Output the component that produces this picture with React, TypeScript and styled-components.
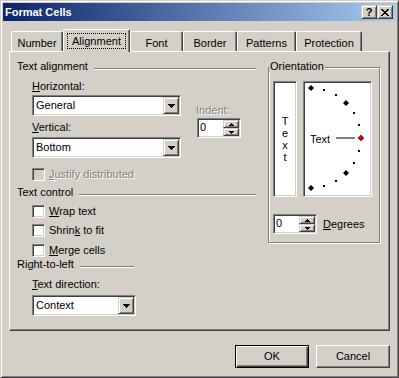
import styled, { createGlobalStyle, css } from 'styled-components';

const FACE = '#d4d0c8';
const SHADOW = '#808080';
const DARK = '#404040';
const LIGHT = '#ffffff';

const GlobalStyle = createGlobalStyle`
  * { box-sizing: border-box; }
  html, body { margin: 0; padding: 0; background: ${FACE}; }
  body {
    font-family: "Liberation Sans", Arial, sans-serif;
    font-size: 11px;
    line-height: 13px;
    color: #000;
  }
`;

const sunken = css`
  border: 1px solid;
  border-color: ${SHADOW} ${LIGHT} ${LIGHT} ${SHADOW};
  box-shadow: inset 1px 1px ${DARK}, inset -1px -1px ${FACE};
`;

const raisedFrame = css`
  border: 1px solid;
  border-color: ${FACE} ${DARK} ${DARK} ${FACE};
  box-shadow: inset 1px 1px ${LIGHT}, inset -1px -1px ${SHADOW};
`;

const Window = styled.div`
  ${raisedFrame};
  width: 399px;
  height: 378px;
  padding: 2px;
  display: flex;
  flex-direction: column;
  background: ${FACE};
`;

const TitleBar = styled.div`
  height: 18px;
  display: flex;
  align-items: center;
  padding-left: 2px;
  background: linear-gradient(to right, #0a246a, #a6caf0);
  color: #fff;
  font-weight: bold;
`;

const Title = styled.span`
  flex: 1;
  line-height: 18px;
`;

const CaptionButton = styled.div`
  ${raisedFrame};
  width: 16px;
  height: 14px;
  display: flex;
  align-items: center;
  justify-content: center;
  background: ${FACE};
  color: #000;
  font-weight: bold;
  line-height: 12px;
  &:last-child {
    margin-right: 3px;
  }
`;

const Body = styled.div`
  flex: 1;
  display: flex;
  flex-direction: column;
  padding: 8px 6px 0 6px;
`;

const TabStrip = styled.div`
  display: flex;
  align-items: flex-end;
  height: 22px;
  margin-left: 2px;
`;

const Tab = styled.div<{ $active?: boolean; $width: number }>`
  width: ${(p) => p.$width}px;
  height: ${(p) => (p.$active ? 23 : 20)}px;
  padding-top: ${(p) => (p.$active ? 3 : 5)}px;
  margin-bottom: ${(p) => (p.$active ? -1 : 0)}px;
  border-left: 1px solid ${LIGHT};
  border-top: 1px solid ${LIGHT};
  border-right: 1px solid ${DARK};
  border-radius: 2px 2px 0 0;
  box-shadow: inset -1px 0 ${SHADOW};
  background: ${FACE};
  text-align: center;
  position: relative;
  z-index: ${(p) => (p.$active ? 1 : 0)};
`;

const TabLabel = styled.span<{ $focus?: boolean }>`
  display: inline-block;
  ${(p) =>
    p.$focus &&
    css`
      border: 1px dotted #000;
      padding: 1px 4px 0 4px;
    `}
`;

const Panel = styled.div`
  height: 280px;
  border-left: 1px solid ${LIGHT};
  border-top: 1px solid ${LIGHT};
  border-right: 1px solid ${DARK};
  border-bottom: 1px solid ${DARK};
  box-shadow: inset -1px -1px ${SHADOW};
  display: grid;
  grid-template-columns: 240px 113px;
  column-gap: 12px;
  align-items: start;
  padding: 8px 0 0 6px;
`;

const Column = styled.div`
  display: flex;
  flex-direction: column;
`;

const GroupHeader = styled.div<{ $width: number; $top?: number }>`
  display: flex;
  align-items: flex-start;
  width: ${(p) => p.$width}px;
  height: 13px;
  padding-left: 1px;
  margin-top: ${(p) => p.$top ?? 0}px;
`;

const HeaderLine = styled.div`
  flex: 1;
  height: 2px;
  margin: 8px 0 0 6px;
  border-top: 1px solid ${SHADOW};
  border-bottom: 1px solid ${LIGHT};
`;

const Indented = styled.div<{ $top?: number }>`
  display: flex;
  flex-direction: column;
  padding-left: 16px;
  margin-top: ${(p) => p.$top ?? 0}px;
`;

const AlignBlock = styled.div`
  display: flex;
  margin-top: 7px;
`;

const IndentColumn = styled.div`
  display: flex;
  flex-direction: column;
  margin-left: 15px;
  padding-top: 24px;
`;

const FieldLabel = styled.div<{ $top?: number; $disabled?: boolean }>`
  height: 13px;
  margin-top: ${(p) => p.$top ?? 0}px;
  white-space: nowrap;
  ${(p) =>
    p.$disabled &&
    css`
      color: ${SHADOW};
      text-shadow: 1px 1px 0 ${LIGHT};
    `}
`;

const Accel = styled.span`
  text-decoration: underline;
  text-underline-offset: 1px;
`;

const SelectBox = styled.div<{ $width: number; $top?: number }>`
  ${sunken};
  width: ${(p) => p.$width}px;
  height: 21px;
  margin-top: ${(p) => p.$top ?? 0}px;
  padding: 1px;
  display: flex;
  background: #fff;
`;

const SelectValue = styled.span`
  flex: 1;
  padding: 2px 0 0 2px;
`;

const ArrowButton = styled.div`
  ${raisedFrame};
  width: 16px;
  height: 17px;
  display: flex;
  align-items: center;
  justify-content: center;
  background: ${FACE};
`;

const SpinBox = styled.div<{ $top?: number; $left?: number }>`
  ${sunken};
  width: 44px;
  height: 20px;
  margin-top: ${(p) => p.$top ?? 0}px;
  margin-left: ${(p) => p.$left ?? 0}px;
  padding: 1px;
  display: flex;
  background: #fff;
`;

const SpinValue = styled.span`
  flex: 1;
  padding: 1px 0 0 1px;
`;

const SpinButtons = styled.div`
  width: 16px;
  display: flex;
  flex-direction: column;
`;

const SpinButton = styled.div`
  ${raisedFrame};
  flex: 1;
  display: flex;
  align-items: center;
  justify-content: center;
  background: ${FACE};
`;

const CheckRow = styled.div<{ $top: number; $disabled?: boolean }>`
  display: flex;
  align-items: center;
  gap: 4px;
  height: 13px;
  margin-top: ${(p) => p.$top}px;
  white-space: nowrap;
  ${(p) =>
    p.$disabled &&
    css`
      color: ${SHADOW};
      text-shadow: 1px 1px 0 ${LIGHT};
    `}
`;

const CheckBox = styled.div<{ $disabled?: boolean }>`
  ${sunken};
  width: 13px;
  height: 13px;
  flex-shrink: 0;
  background: ${(p) => (p.$disabled ? FACE : '#fff')};
`;

const GroupBox = styled.div`
  width: 112px;
  margin-top: 7px;
  border: 1px solid ${SHADOW};
  box-shadow: inset 1px 1px ${LIGHT}, 1px 1px ${LIGHT};
  padding: 0 7px 8px 4px;
  display: flex;
  flex-direction: column;
`;

const Legend = styled.div`
  align-self: flex-start;
  height: 13px;
  margin: -8px 0 0 -4px;
  padding: 0 1px;
  background: ${FACE};
`;

const OrientRow = styled.div`
  display: flex;
  gap: 6px;
  margin-top: 8px;
`;

const VerticalText = styled.div`
  ${sunken};
  width: 24px;
  height: 116px;
  background: #fff;
  display: flex;
  flex-direction: column;
  align-items: center;
  justify-content: center;
  line-height: 12px;
`;

const DialBox = styled.div`
  ${sunken};
  width: 69px;
  height: 116px;
  padding: 1px;
  background: #fff;
  display: flex;
`;

const DegreesRow = styled.div`
  display: flex;
  align-items: center;
  gap: 6px;
  margin-top: 17px;
`;

const ButtonRow = styled.div`
  display: flex;
  justify-content: flex-end;
  gap: 7px;
  margin-top: 14px;
`;

const PushButton = styled.div<{ $default?: boolean }>`
  width: 74px;
  height: 23px;
  display: flex;
  align-items: center;
  justify-content: center;
  background: ${FACE};
  ${(p) =>
    p.$default
      ? css`
          border: 1px solid #000;
          box-shadow: inset 1px 1px ${LIGHT}, inset -1px -1px ${DARK}, inset -2px -2px ${SHADOW};
        `
      : css`
          border: 1px solid;
          border-color: ${LIGHT} ${DARK} ${DARK} ${LIGHT};
          box-shadow: inset -1px -1px ${SHADOW};
        `}
`;

const DownArrow = ({ w = 7 }: { w?: number }) => {
  const rows = Math.ceil(w / 2);
  return (
    <svg width={w} height={rows} shapeRendering="crispEdges">
      {Array.from({ length: rows }, (_, i) => (
        <rect key={i} x={i} y={i} width={w - i * 2} height={1} fill="#000" />
      ))}
    </svg>
  );
};

const UpArrow = ({ w = 5 }: { w?: number }) => {
  const rows = Math.ceil(w / 2);
  return (
    <svg width={w} height={rows} shapeRendering="crispEdges">
      {Array.from({ length: rows }, (_, i) => (
        <rect key={i} x={rows - 1 - i} y={i} width={w - (rows - 1 - i) * 2} height={1} fill="#000" />
      ))}
    </svg>
  );
};

const closeRows: [number, number][][] = [
  [[0, 2], [6, 2]],
  [[1, 2], [5, 2]],
  [[2, 4]],
  [[3, 2]],
  [[2, 4]],
  [[1, 2], [5, 2]],
  [[0, 2], [6, 2]],
];

const CloseGlyph = () => (
  <svg width={8} height={7} shapeRendering="crispEdges">
    {closeRows.map((row, y) =>
      row.map(([x, len]) => <rect key={`${y}-${x}`} x={x} y={y} width={len} height={1} fill="#000" />),
    )}
  </svg>
);

const Select = (props: { value: string; width: number; top?: number }) => (
  <SelectBox $width={props.width} $top={props.top}>
    <SelectValue>{props.value}</SelectValue>
    <ArrowButton>
      <DownArrow />
    </ArrowButton>
  </SelectBox>
);

const Spinner = (props: { top?: number; left?: number }) => (
  <SpinBox $top={props.top} $left={props.left}>
    <SpinValue>0</SpinValue>
    <SpinButtons>
      <SpinButton>
        <UpArrow />
      </SpinButton>
      <SpinButton>
        <DownArrow w={5} />
      </SpinButton>
    </SpinButtons>
  </SpinBox>
);

const Dial = () => {
  const cx = 6;
  const cy = 55;
  const r = 50;
  const pt = (deg: number) => {
    const a = (deg * Math.PI) / 180;
    return [cx + r * Math.cos(a), cy - r * Math.sin(a)];
  };
  const diamond = (x: number, y: number) => `${x},${y - 3} ${x + 3},${y} ${x},${y + 3} ${x - 3},${y}`;
  return (
    <svg width={65} height={112}>
      {[75, 60, 30, 15, -15, -30, -60, -75].map((d) => {
        const [x, y] = pt(d);
        return <rect key={d} x={Math.round(x) - 1} y={Math.round(y) - 1} width={2} height={2} fill="#000" />;
      })}
      {[90, 45, -45, -90].map((d) => {
        const [x, y] = pt(d);
        return <polygon key={d} points={diamond(Math.round(x), Math.round(y))} fill="#000" />;
      })}
      <polygon points={diamond(56, 55)} fill="#cc0000" stroke="#800000" strokeWidth={0.6} />
      <text x={5} y={60} fontFamily="Liberation Sans, Arial, sans-serif" fontSize={11} fill="#000">
        Text
      </text>
      <rect x={31} y={54.5} width={19} height={1} fill="#000" />
    </svg>
  );
};

const tabs: [string, number][] = [
  ['Number', 52],
  ['Alignment', 67],
  ['Font', 53],
  ['Border', 54],
  ['Patterns', 59],
  ['Protection', 66],
];

export default function App() {
  return (
    <>
      <GlobalStyle />
      <Window>
        <TitleBar>
          <Title>Format Cells</Title>
          <CaptionButton>?</CaptionButton>
          <CaptionButton>
            <CloseGlyph />
          </CaptionButton>
        </TitleBar>
        <Body>
          <TabStrip>
            {tabs.map(([name, w]) => (
              <Tab key={name} $width={w} $active={name === 'Alignment'}>
                <TabLabel $focus={name === 'Alignment'}>{name}</TabLabel>
              </Tab>
            ))}
          </TabStrip>
          <Panel>
            <Column>
              <GroupHeader $width={240}>
                Text alignment
                <HeaderLine />
              </GroupHeader>
              <Indented>
                <AlignBlock>
                  <Column>
                    <FieldLabel>
                      <Accel>H</Accel>orizontal:
                    </FieldLabel>
                    <Select value="General" width={149} top={2} />
                    <FieldLabel $top={5}>
                      <Accel>V</Accel>ertical:
                    </FieldLabel>
                    <Select value="Bottom" width={149} top={3} />
                  </Column>
                  <IndentColumn>
                    <FieldLabel $disabled>Indent:</FieldLabel>
                    <Spinner top={1} left={1} />
                  </IndentColumn>
                </AlignBlock>
                <CheckRow $top={10} $disabled>
                  <CheckBox $disabled />
                  <span>
                    <Accel>J</Accel>ustify distributed
                  </span>
                </CheckRow>
              </Indented>
              <GroupHeader $width={240} $top={5}>
                Text control
                <HeaderLine />
              </GroupHeader>
              <Indented>
                <CheckRow $top={6}>
                  <CheckBox />
                  <span>
                    <Accel>W</Accel>rap text
                  </span>
                </CheckRow>
                <CheckRow $top={6}>
                  <CheckBox />
                  <span>
                    Shrin<Accel>k</Accel> to fit
                  </span>
                </CheckRow>
                <CheckRow $top={7}>
                  <CheckBox />
                  <span>
                    <Accel>M</Accel>erge cells
                  </span>
                </CheckRow>
              </Indented>
              <GroupHeader $width={118} $top={1}>
                Right-to-left
                <HeaderLine />
              </GroupHeader>
              <Indented>
                <FieldLabel $top={7}>
                  <Accel>T</Accel>ext direction:
                </FieldLabel>
                <Select value="Context" width={104} top={4} />
              </Indented>
            </Column>
            <GroupBox>
              <Legend>Orientation</Legend>
              <OrientRow>
                <VerticalText>
                  <span>T</span>
                  <span>e</span>
                  <span>x</span>
                  <span>t</span>
                </VerticalText>
                <DialBox>
                  <Dial />
                </DialBox>
              </OrientRow>
              <DegreesRow>
                <Spinner />
                <span>
                  <Accel>D</Accel>egrees
                </span>
              </DegreesRow>
            </GroupBox>
          </Panel>
          <ButtonRow>
            <PushButton $default>OK</PushButton>
            <PushButton>Cancel</PushButton>
          </ButtonRow>
        </Body>
      </Window>
    </>
  );
}
